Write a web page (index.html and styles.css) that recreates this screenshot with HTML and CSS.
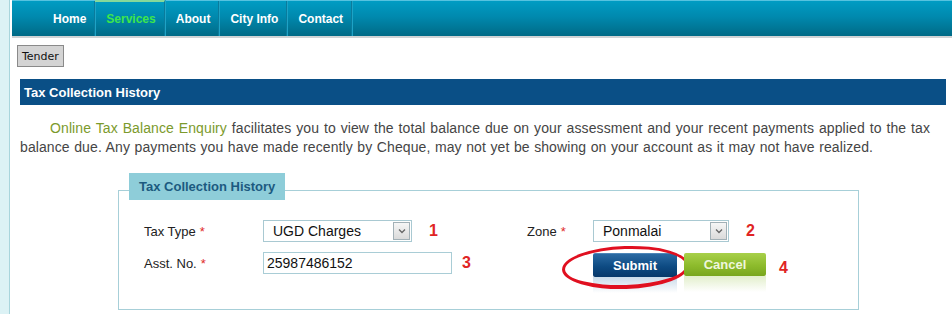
FILE: index.html
```html
<!DOCTYPE html>
<html lang="en">
<head>
    <meta charset="UTF-8">
    <meta name="viewport" content="width=device-width, initial-scale=1.0">
    <title>Tax Collection History</title>
    <link rel="stylesheet" href="styles.css">
</head>
<body>
    <div class="frame">
        <div class="page">
            <nav class="topnav">
                <a href="#" class="nav-item">Home</a>
                <a href="#" class="nav-item active">Services</a>
                <a href="#" class="nav-item">About</a>
                <a href="#" class="nav-item">City Info</a>
                <a href="#" class="nav-item">Contact</a>
            </nav>

            <div class="toolbar">
                <button type="button" class="tender">Tender</button>
            </div>

            <div class="content">
                <h2 class="section-title">Tax Collection History</h2>

                <p class="intro"><span class="highlight">Online Tax Balance Enquiry</span> facilitates you to view the total balance due on your assessment and your recent payments applied to the tax balance due. Any payments you have made recently by Cheque, may not yet be showing on your account as it may not have realized.</p>

                <div class="search">
                    <div class="legend">Tax Collection History</div>

                    <div class="form-grid">
                        <label class="field-label" for="taxType">Tax Type <span class="req">*</span></label>
                        <div class="field">
                            <div class="select-box wide">
                                <select id="taxType">
                                    <option>UGD Charges</option>
                                    <option>Property Tax</option>
                                    <option>Water Charges</option>
                                </select>
                                <span class="arrow"><svg width="8" height="6" viewBox="0 0 8 6"><path d="M1 1.5 L4 4.5 L7 1.5" fill="none" stroke="#666" stroke-width="1.3"/></svg></span>
                            </div>
                            <span class="step">1</span>
                        </div>

                        <label class="field-label" for="zone">Zone <span class="req">*</span></label>
                        <div class="field">
                            <div class="select-box narrow">
                                <select id="zone">
                                    <option>Ponmalai</option>
                                    <option>Srirangam</option>
                                    <option>Ariyamangalam</option>
                                </select>
                                <span class="arrow"><svg width="8" height="6" viewBox="0 0 8 6"><path d="M1 1.5 L4 4.5 L7 1.5" fill="none" stroke="#666" stroke-width="1.3"/></svg></span>
                            </div>
                            <span class="step">2</span>
                        </div>

                        <label class="field-label" for="asstNo">Asst. No. <span class="req">*</span></label>
                        <div class="field">
                            <input type="text" id="asstNo" class="text-input" value="25987486152">
                            <span class="step step-3">3</span>
                        </div>

                        <span></span>
                        <div class="field buttons">
                            <div class="submit-wrap">
                                <button type="button" class="btn btn-submit">Submit</button>
                                <span class="circle"></span>
                            </div>
                            <button type="button" class="btn btn-cancel">Cancel</button>
                            <span class="step step-4">4</span>
                        </div>
                    </div>
                </div>
            </div>
        </div>
    </div>
</body>
</html>
```

FILE: styles.css
```css
body {
    margin: 0;
    padding: 0;
    background-color: #fff;
    font-family: "Liberation Sans", Arial, sans-serif;
    color: #333;
}

.frame {
    border-left: 9px solid #dcf2f5;
    height: 314px;
}

.page {
    border-left: 1px solid #a8d5dc;
    height: 314px;
    padding-left: 2px;
    background-color: #fff;
}

/* top navigation */
.topnav {
    display: flex;
    height: 35px;
    padding-left: 30px;
    border-top: 1px solid #56c2df;
    background: linear-gradient(#009cc3, #0089ae 45%, #006a86);
    box-shadow: 0 2px 0 #cfd3d5;
}

.nav-item {
    display: flex;
    align-items: center;
    padding: 0 8px 0 11px;
    border-right: 1px solid #0a7b9c;
    box-shadow: 1px 0 0 #1ea3c6;
    color: #fff;
    font-weight: bold;
    font-size: 12px;
    text-decoration: none;
}

.nav-item.active {
    color: #3ee64a;
    border-top: 2px solid #86d89a;
    margin-top: -1px;
}

.toolbar {
    padding: 9px 0 0 5px;
    height: 34px;
}

.tender {
    height: 22px;
    padding: 0 4px;
    background-color: #d4d4d4;
    border: 1px solid #8a8a8a;
    font-family: "DejaVu Sans", sans-serif;
    font-size: 11px;
    color: #111;
}

.content {
    margin: 0 6px 0 8px;
}

.section-title {
    margin: 0;
    height: 26px;
    line-height: 28px;
    padding-left: 4px;
    background-color: #0a4f86;
    color: #fff;
    font-size: 13px;
    font-weight: bold;
}

.intro {
    margin: 14px 16px 0 0;
    text-indent: 30px;
    text-align: justify;
    font-size: 14px;
    letter-spacing: 0.1px;
    word-spacing: 0.5px;
    line-height: 19px;
    color: #454545;
}

.highlight {
    color: #7c9a2c;
}

/* search panel */
.search {
    margin: 33px 0 0 98px;
    width: 741px;
    height: 120px;
    border: 1px solid #a7cfd8;
    box-sizing: border-box;
}

.legend {
    width: fit-content;
    margin: -18px 0 0 10px;
    padding: 0 10px;
    height: 27px;
    line-height: 27px;
    background-color: #8ecdd9;
    color: #1c5a80;
    font-size: 13px;
    font-weight: bold;
}

.form-grid {
    display: grid;
    grid-template-columns: 119px 264px 66px auto;
    row-gap: 10px;
    margin: 20px 0 0 25px;
}

.field-label {
    display: flex;
    align-items: center;
    height: 22px;
    font-size: 13px;
    color: #222;
}

.req {
    color: #e02a2a;
    margin-left: 4px;
}

.field {
    display: flex;
    align-items: center;
    height: 22px;
}

.select-box {
    display: flex;
    height: 22px;
    box-sizing: border-box;
    border: 1px solid #a9c9d2;
    background-color: #fff;
}

.select-box.wide {
    width: 149px;
}

.select-box.narrow {
    width: 136px;
}

.select-box select {
    flex: 1;
    min-width: 0;
    -webkit-appearance: none;
    appearance: none;
    border: none;
    outline: none;
    background: transparent;
    padding: 0 0 0 9px;
    font-family: "Liberation Sans", Arial, sans-serif;
    font-size: 14px;
    color: #111;
}

.arrow {
    display: flex;
    align-items: center;
    justify-content: center;
    width: 15px;
    margin: 1px 1px 1px 0;
    border: 1px solid #a2b0b6;
    background: linear-gradient(#f6f6f6, #dadada);
}

.step {
    margin-left: 17px;
    color: #e02424;
    font-weight: bold;
    font-size: 16px;
}

.step-3 {
    margin-left: 10px;
}

.step-4 {
    margin-left: 13px;
    padding-top: 6px;
}

.text-input {
    width: 189px;
    height: 22px;
    box-sizing: border-box;
    border: 1px solid #a9cdd6;
    padding: 0 0 0 3px;
    font-family: "Liberation Sans", Arial, sans-serif;
    font-size: 14px;
    color: #111;
    outline: none;
}

.buttons {
    align-items: flex-start;
    padding-top: 1px;
}

.submit-wrap {
    position: relative;
}

.btn {
    position: relative;
    height: 24px;
    border: none;
    border-radius: 2px;
    color: #fff;
    font-family: "Liberation Sans", Arial, sans-serif;
    font-weight: bold;
    font-size: 13px;
}

.btn::after {
    content: "";
    position: absolute;
    left: 0;
    right: 0;
    top: 100%;
    height: 16px;
    pointer-events: none;
}

.btn-submit {
    width: 84px;
    background: linear-gradient(#2a6aa3, #0d4a82 55%, #07386a);
    border-top: 1px solid #4d86b8;
}

.btn-submit::after {
    background: linear-gradient(rgba(40, 110, 170, 0.25), rgba(255, 255, 255, 0));
}

.btn-cancel {
    width: 82px;
    height: 23px;
    margin-left: 7px;
    background: linear-gradient(#a8d04a, #8dbb2c 55%, #78a61e);
    color: #eef6dc;
}

.btn-cancel::after {
    background: linear-gradient(rgba(140, 190, 50, 0.25), rgba(255, 255, 255, 0));
}

.circle {
    position: absolute;
    left: -31px;
    top: -7px;
    width: 127px;
    height: 43px;
    box-sizing: border-box;
    border: 3px solid #e01020;
    border-bottom-width: 4px;
    border-radius: 50%;
    transform: rotate(-2deg);
    pointer-events: none;
}
```
